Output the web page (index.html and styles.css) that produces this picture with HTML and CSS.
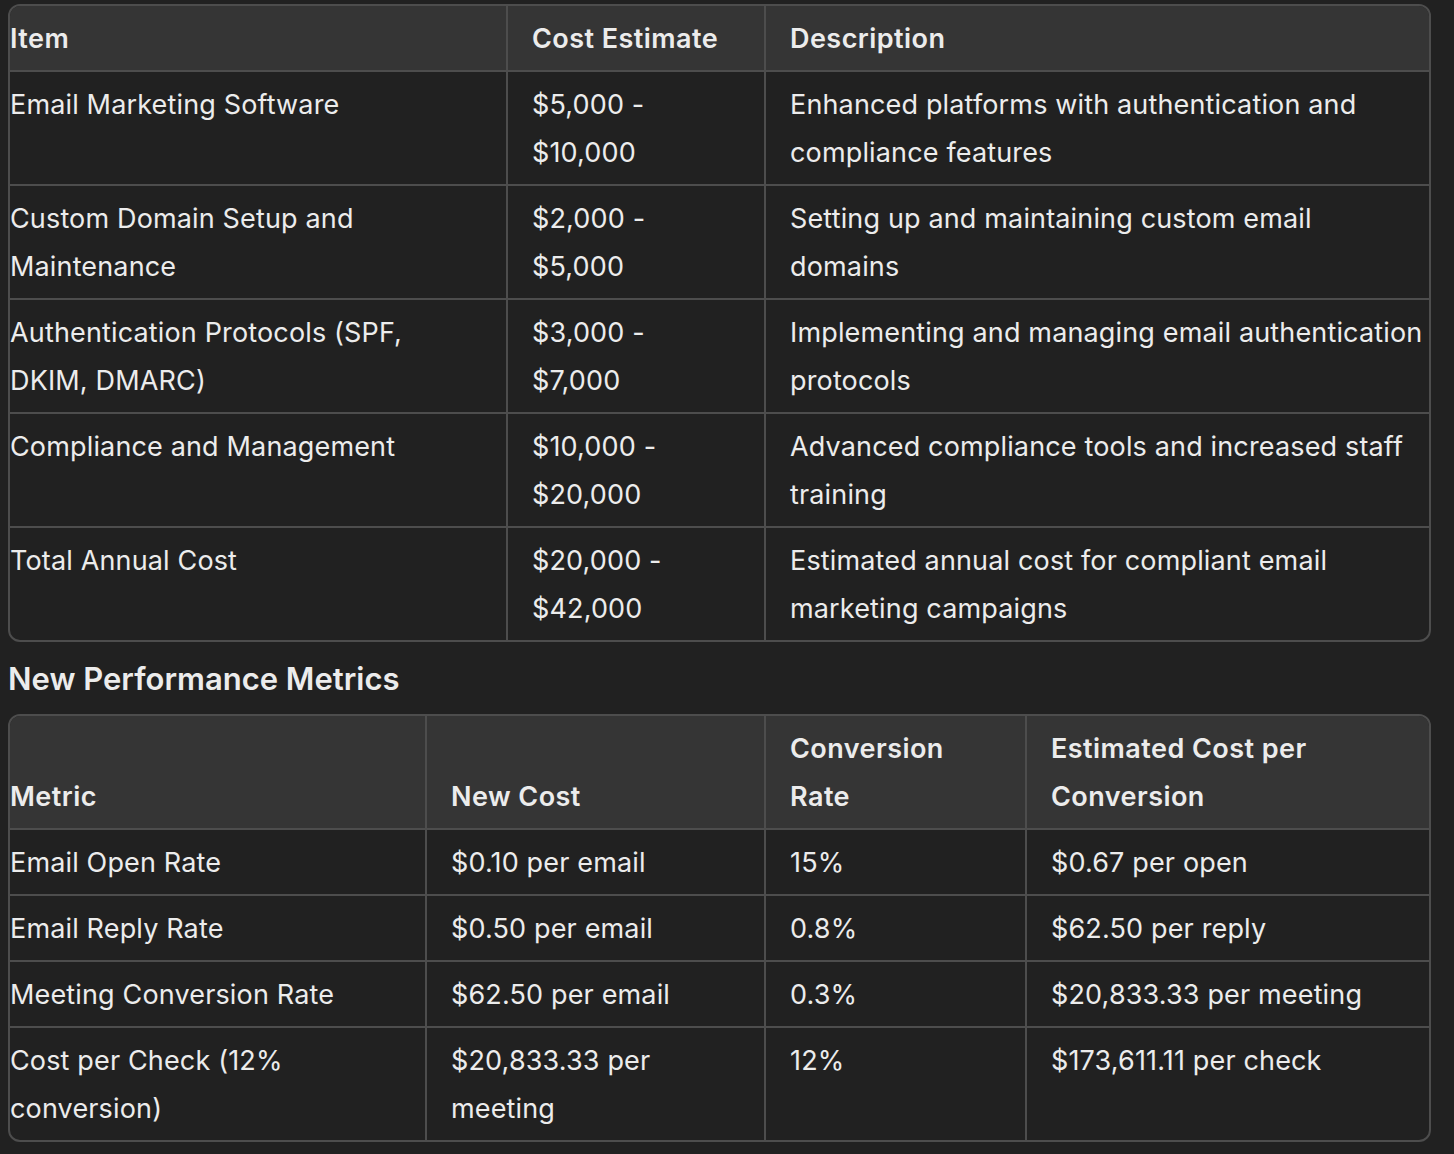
FILE: index.html
```html
<!DOCTYPE html>
<html lang="en">
<head>
<meta charset="utf-8">
<title>Cost Tables</title>
<link rel="stylesheet" href="styles.css">
</head>
<body>
<main class="doc">
  <table class="tbl tbl-costs">
    <colgroup>
      <col class="c-item">
      <col class="c-cost">
      <col>
    </colgroup>
    <thead>
      <tr><th>Item</th><th>Cost Estimate</th><th>Description</th></tr>
    </thead>
    <tbody>
      <tr><td>Email Marketing Software</td><td>$5,000 - $10,000</td><td>Enhanced platforms with authentication and compliance features</td></tr>
      <tr><td>Custom Domain Setup and Maintenance</td><td>$2,000 - $5,000</td><td>Setting up and maintaining custom email domains</td></tr>
      <tr><td>Authentication Protocols (SPF, DKIM, DMARC)</td><td>$3,000 - $7,000</td><td>Implementing and managing email authentication protocols</td></tr>
      <tr><td>Compliance and Management</td><td>$10,000 - $20,000</td><td>Advanced compliance tools and increased staff training</td></tr>
      <tr><td>Total Annual Cost</td><td>$20,000 - $42,000</td><td>Estimated annual cost for compliant email marketing campaigns</td></tr>
    </tbody>
  </table>

  <h3 class="section-title">New Performance Metrics</h3>

  <table class="tbl tbl-metrics">
    <colgroup>
      <col class="c-metric">
      <col class="c-newcost">
      <col class="c-rate">
      <col>
    </colgroup>
    <thead>
      <tr><th>Metric</th><th>New Cost</th><th>Conversion Rate</th><th>Estimated Cost per Conversion</th></tr>
    </thead>
    <tbody>
      <tr><td>Email Open Rate</td><td>$0.10 per email</td><td>15%</td><td>$0.67 per open</td></tr>
      <tr><td>Email Reply Rate</td><td>$0.50 per email</td><td>0.8%</td><td>$62.50 per reply</td></tr>
      <tr><td>Meeting Conversion Rate</td><td>$62.50 per email</td><td>0.3%</td><td>$20,833.33 per meeting</td></tr>
      <tr><td>Cost per Check (12% conversion)</td><td>$20,833.33 per meeting</td><td>12%</td><td>$173,611.11 per check</td></tr>
    </tbody>
  </table>
</main>
</body>
</html>
```

FILE: styles.css
```css
html, body {
  margin: 0;
  padding: 0;
  background: #212121;
}

body {
  color: #ececec;
  font-family: Inter, "Noto Sans", "Liberation Sans", sans-serif;
  font-size: 27px;
  line-height: 48px;
  letter-spacing: 0.15px;
}

.doc {
  padding: 4px 23px 0 8px;
}

.tbl {
  width: 1423px;
  border-collapse: separate;
  border-spacing: 0;
  border: 2px solid #4d4d4d;
  border-radius: 12px;
  table-layout: fixed;
}

.tbl th,
.tbl td {
  padding: 9px 28px 7px 24px;
  text-align: left;
  border-right: 2px solid #4d4d4d;
  border-bottom: 2px solid #4d4d4d;
}

.tbl th {
  background: #353535;
  font-weight: 600;
  letter-spacing: 0.45px;
  vertical-align: bottom;
}

.tbl td {
  font-weight: 400;
  vertical-align: top;
}

.tbl th:first-child,
.tbl td:first-child {
  padding-left: 0;
  padding-right: 24px;
}

.tbl th:last-child,
.tbl td:last-child {
  padding-right: 4px;
  border-right: 0;
}

.tbl tbody tr:last-child td {
  border-bottom: 0;
}

.tbl thead tr th:first-child {
  border-top-left-radius: 10px;
}

.tbl thead tr th:last-child {
  border-top-right-radius: 10px;
}

.c-item { width: 498px; }
.c-cost { width: 258px; }

.c-metric { width: 417px; }
.c-newcost { width: 339px; }
.c-rate { width: 261px; }

.section-title {
  margin: 15px 0 13px;
  font-size: 31px;
  line-height: 44px;
  font-weight: 600;
  letter-spacing: 0;
}
```
